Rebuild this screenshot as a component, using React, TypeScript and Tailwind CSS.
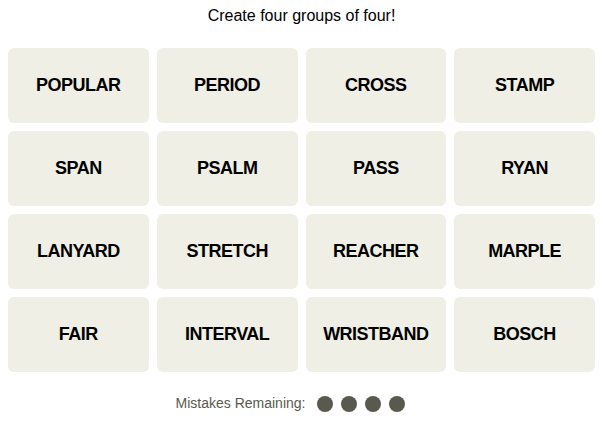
const words = [
  "POPULAR", "PERIOD", "CROSS", "STAMP",
  "SPAN", "PSALM", "PASS", "RYAN",
  "LANYARD", "STRETCH", "REACHER", "MARPLE",
  "FAIR", "INTERVAL", "WRISTBAND", "BOSCH",
];

export default function App() {
  return (
    <div className="w-[603px] h-[421px] bg-white font-['Liberation_Sans',Arial,sans-serif] text-black">
      <p className="h-[48px] pt-[6px] text-center text-[16px] leading-[20px]">Create four groups of four!</p>
      <div className="grid grid-cols-4 gap-2 px-2">
        {words.map((w) => (
          <button
            key={w}
            className="h-[75px] rounded-md bg-[#efefe6] flex items-center justify-center text-[18px] font-bold tracking-[-0.5px]"
          >
            {w}
          </button>
        ))}
      </div>
      <div className="mt-[21px] pr-[22px] flex items-center justify-center gap-3">
        <span className="text-[14px] text-[#5a594e]">Mistakes Remaining:</span>
        <div className="flex gap-[8px]">
          {[0, 1, 2, 3].map((i) => (
            <span key={i} className="w-[16px] h-[16px] rounded-full bg-[#5a594e]" />
          ))}
        </div>
      </div>
    </div>
  );
}
